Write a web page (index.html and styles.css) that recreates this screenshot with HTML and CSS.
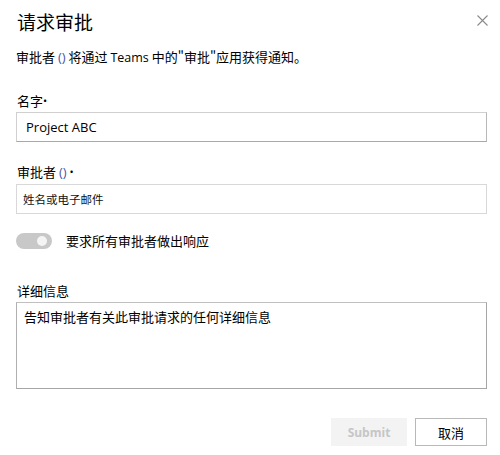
FILE: index.html
```html
<!DOCTYPE html>
<html lang="zh-CN">
<head>
<meta charset="utf-8">
<link rel="stylesheet" href="styles.css">
</head>
<body>
<div class="dialog">
  <div class="header">
    <h1 class="title">请求审批</h1>
    <button class="close" aria-label="关闭">
      <svg width="11" height="11" viewBox="0 0 11 11"><path d="M0.5 0.5 L10.5 10.5 M10.5 0.5 L0.5 10.5" stroke="#8a8a8a" stroke-width="1.1" fill="none"/></svg>
    </button>
  </div>
  <p class="intro">审批者 <span class="paren">()</span> 将通过 <span class="latin">Teams</span> 中的"审批"应用获得通知。</p>

  <label class="label first">名字<span class="dot">•</span></label>
  <div class="input"><span class="latin">Project ABC</span></div>

  <label class="label">审批者 <span class="paren">()</span><span class="dot"> •</span></label>
  <div class="input placeholder">姓名或电子邮件</div>

  <div class="toggle-row">
    <span class="toggle"><span class="knob"></span></span>
    <span class="toggle-label">要求所有审批者做出响应</span>
  </div>

  <label class="label details">详细信息</label>
  <div class="textarea">告知审批者有关此审批请求的任何详细信息</div>

  <div class="actions">
    <button class="btn submit">Submit</button>
    <button class="btn cancel">取消</button>
  </div>
</div>
</body>
</html>
```
FILE: styles.css
```css
html, body {
  margin: 0;
  padding: 0;
  background: #ffffff;
}
body {
  font-family: "Noto Sans CJK SC", "Open Sans", sans-serif;
  color: #000000;
}
.dialog {
  width: 500px;
  height: 455px;
  box-sizing: border-box;
  padding: 9px 13px 0 16px;
  display: flex;
  flex-direction: column;
}
.header {
  display: flex;
  justify-content: space-between;
  align-items: center;
  height: 26px;
}
.title {
  margin: 0;
  font-size: 19px;
  font-weight: 400;
  line-height: 26px;
  height: 26px;
  padding-left: 1px;
}
.close {
  border: 0;
  background: none;
  padding: 0;
  margin-right: -1px;
  margin-top: -4px;
  width: 11px;
  height: 11px;
  display: flex;
}
.latin {
  font-family: "Open Sans", "Noto Sans", sans-serif;
}
.intro {
  margin: 13px 0 0 0;
  font-size: 13px;
  line-height: 18px;
  height: 18px;
  overflow: hidden;
}
.intro .latin { font-size: 12.5px; }
.paren {
  color: #4f52a6;
  font-family: "Open Sans", sans-serif;
  font-size: 13px;
}
.label {
  display: flex;
  align-items: center;
  height: 18px;
  font-size: 13px;
  line-height: 18px;
  margin-top: 26px;
  padding-left: 1px;
  white-space: pre;
}
.label.first { margin-top: 26px; }
.label + .input { margin-top: 2px; }
.input + .label { margin-top: 21px; }
.label.details { margin-top: 31px; }
.dot {
  font-family: "Open Sans", sans-serif;
  font-size: 11px;
}
.input {
  height: 30px;
  box-sizing: border-box;
  border: 1px solid #d0d0d0;
  border-bottom-color: #a8a8a8;
  border-right-color: #b8b8b8;
  display: flex;
  align-items: center;
  padding-left: 9px;
  font-size: 13px;
}
.input.placeholder {
  margin-top: 3px;
  padding-left: 6px;
  font-size: 11.5px;
  color: #111;
  border-color: #d8d8d8;
}
.toggle-row {
  margin-top: 17px;
  height: 20px;
  display: flex;
  align-items: center;
  gap: 14px;
}
.toggle {
  width: 36px;
  height: 16px;
  border-radius: 8px;
  background: #c8c8c8;
  position: relative;
  flex: none;
}
.knob {
  position: absolute;
  right: 5px;
  top: 3px;
  width: 10px;
  height: 10px;
  border-radius: 50%;
  background: #f4f4f4;
}
.toggle-label {
  font-size: 13px;
  line-height: 18px;
}
.label.details + .textarea { margin-top: 2px; }
.textarea {
  height: 87px;
  box-sizing: border-box;
  border: 1px solid #a6a6a6;
  border-top-color: #c0c0c0;
  border-left-color: #b0b0b0;
  padding: 5px 7px;
  font-size: 13px;
  line-height: 18px;
}
.actions {
  margin-top: 29px;
  display: flex;
  justify-content: flex-end;
  gap: 8px;
}
.btn {
  height: 28px;
  box-sizing: border-box;
  font-size: 13px;
  padding: 0;
}
.submit {
  width: 76px;
  border: 0;
  background: #f3f3f3;
  color: #c6c6c6;
  font-family: "Open Sans", sans-serif;
  font-weight: 700;
  font-size: 12px;
}
.cancel {
  width: 72px;
  border: 1px solid #b8b8b8;
  background: #fff;
  color: #000;
  font-family: "Noto Sans CJK SC", sans-serif;
}
```
